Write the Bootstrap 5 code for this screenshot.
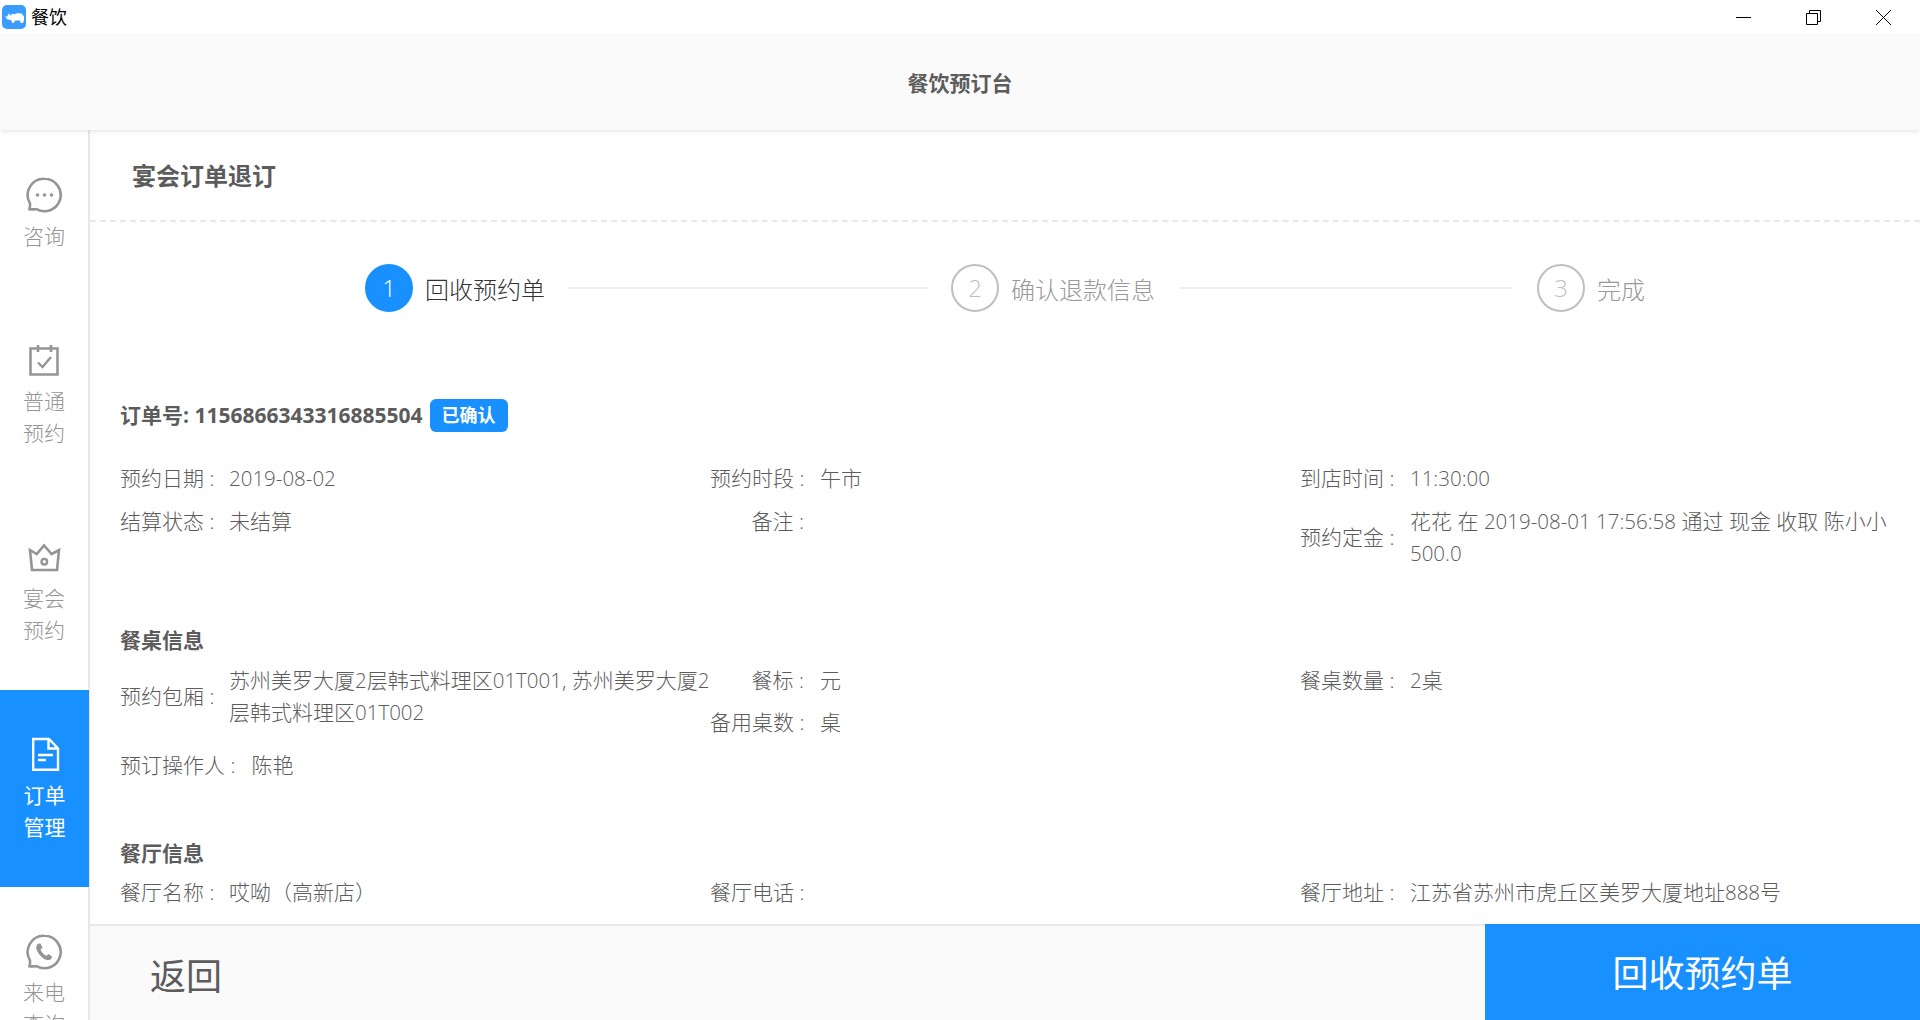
<!DOCTYPE html>
<html lang="zh">
<head>
<meta charset="utf-8">
<title>餐饮</title>
<link href="https://cdn.jsdelivr.net/npm/bootstrap@5.3.0/dist/css/bootstrap.min.css" rel="stylesheet">
<style>
:root{--acc:#1890ff;--txt:#5c5c5c;--ln:#e8e8e8}
html,body{height:100%;overflow:hidden}
body{font-family:"Open Sans","Noto Sans CJK SC",sans-serif;font-size:21px;color:var(--txt);background:#fff;font-weight:300}
.n{font-size:20.5px}
.tbar{height:34px;flex:none;position:relative;z-index:3;background:#fff}
.tbar-name{font-size:18px;color:#000;font-weight:400;margin-left:5px}
.tbar-logo{margin-left:2px;width:24px;height:24px}
.win-ico{width:15px;height:15px;display:block}
.win-ctrls{gap:55px;margin-right:29px}
.hd{height:96px;flex:none;background:#fafafa;box-shadow:0 1px 5px rgba(0,0,0,.12);font-size:21px;font-weight:700;padding-top:3px;position:relative;z-index:2}
.bodywrap{min-height:0;overflow:hidden}
.side{width:90px;flex:none;border-right:2px solid var(--ln)}
.sitem{height:197px;padding-top:47px;color:#959595;line-height:32px;font-size:21px;text-align:center;flex:none}
.sitem.first{height:166px}
.sitem svg{display:block;margin:0 auto 6px;width:36px;height:36px}
.sitem.first svg{margin-bottom:7px}
.sitem.on{background:var(--acc);color:#fff;font-weight:400;width:89px}
.main{min-width:0;min-height:0}
.scroll{min-height:0;overflow:hidden}
.ptitle{height:92px;padding-left:42px;border-bottom:2px dashed var(--ln);font-size:24px;font-weight:700;line-height:92px}
.steps{height:132px;padding-left:275px;font-size:24px;color:#999}
.dot{width:48px;height:48px;border-radius:50%;border:2px solid #bfbfbf;color:#bfbfbf;font-size:24px;flex:none}
.dot.on{background:var(--acc);border-color:var(--acc);color:#fff}
.sname{margin-left:12px;white-space:nowrap;padding-top:3px}
.sname.on{color:#333}
.sline{height:2px;background:#eee;margin:0 24px 0 23px}
.sline-a{width:359px}
.sline-b{width:334px;margin-left:24px}
.details{padding:0 30px}
.ordline{font-weight:700;font-size:21px;height:33px;margin-top:45px}
.stat{background:var(--acc);color:#fff;border-radius:6px;font-size:18px;height:33px;padding:0 12px;margin-left:7px;display:inline-flex;align-items:center}
.frow{--bs-gutter-x:0;line-height:32px}
.lab{flex:none;white-space:nowrap;padding-right:16px}
.lab-w{width:109px}
.lab-w2{width:110px;text-align:right}
.subh{font-weight:700;font-size:21px;line-height:32px}
.foot{height:96px;flex:none;background:#fafafa;border-top:2px solid var(--ln);font-size:36px;padding-left:60px;line-height:1;font-weight:400}
.foot-txt{padding-top:8px}
.foot-btn{width:435px;background:var(--acc);color:#fff;border:0;border-radius:0;font-size:36px;margin-top:-2px;height:calc(100% + 2px);font-weight:400;padding-top:10px}
.foot-btn:hover{background:var(--acc);color:#fff}
.mt-30{margin-top:30px}.mt-11{margin-top:11px}.mt-10{margin-top:10px}.mt-55{margin-top:55px}.mt-56{margin-top:56px}.mt-7{margin-top:7px}.mt-8{margin-top:8px}
.lab-mid{line-height:64px}
</style>
</head>
<body class="d-flex flex-column">
<div class="tbar d-flex align-items-center justify-content-between">
  <div class="d-flex align-items-center">
    <svg class="tbar-logo" viewBox="0 0 24 24"><rect width="24" height="24" rx="5" fill="#3b9cff"/><path d="M2.500 10.500l2.500 1.500 2-4 1 2.800L11 8.500l.8 1 3.200-1.300 4.500.3 2.500 3v4l-1.200 2.500h-2.200l-.6-2.500h-5l-1 2.500H10.500l-1.500-3-3.500-.5z" fill="#fff"/></svg>
    <span class="tbar-name">餐饮</span>
  </div>
  <div class="d-flex align-items-center win-ctrls">
    <svg class="win-ico" viewBox="0 0 15 15"><path d="M0 7.500h15" stroke="#000" fill="none"/></svg>
    <svg class="win-ico" viewBox="0 0 15 15"><path d="M.5 3.500h11v11H.500zM3.500 3.500V.5h11v11h-3" stroke="#000" fill="none"/></svg>
    <svg class="win-ico" viewBox="0 0 15 15"><path d="M0 0l15 15M15 0L0 15" stroke="#000" fill="none"/></svg>
  </div>
</div>
<header class="hd d-flex align-items-center justify-content-center">餐饮预订台</header>
<div class="bodywrap d-flex flex-grow-1">
  <nav class="side d-flex flex-column">
    <div class="sitem first">
      <svg viewBox="0 0 36 36" fill="none" stroke="currentColor" stroke-width="2.600"><path d="M18.500 1.800a16.200 16.200 0 1 1-8 30.300c-2 .2-5 .6-7 .1.500-2 .7-4 .4-6A16.200 16.200 0 0 1 18.500 1.800z"/><g fill="currentColor" stroke="none"><circle cx="11.500" cy="18" r="1.800"/><circle cx="18.500" cy="18" r="1.800"/><circle cx="25.500" cy="18" r="1.800"/></g></svg>
      咨询
    </div>
    <div class="sitem">
      <svg viewBox="0 0 36 36" fill="none" stroke="currentColor" stroke-width="2.600"><path d="M4.500 5.500h27v26h-27zM12 2v7M25 2v7"/><path d="M12 19.500l4.500 4.500 8.500-10" stroke-width="2.400"/></svg>
      普通<br>预约
    </div>
    <div class="sitem">
      <svg viewBox="0 0 36 36" fill="none" stroke="currentColor" stroke-width="2.600"><path d="M4 10l6.700 4L18 5.500 25.700 14 33 10l-2 20H6z"/><circle cx="18.300" cy="21.700" r="2.800" stroke-width="2.400"/></svg>
      宴会<br>预约
    </div>
    <div class="sitem on">
      <svg viewBox="0 0 36 36" fill="none" stroke="currentColor" stroke-width="2.400"><path d="M6.200 2h15.800l9 9.500v21.300H6.200zM21.500 2v9.500H31"/><path d="M11 18h15M11 23h8" stroke-width="2.600"/></svg>
      订单<br>管理
    </div>
    <div class="sitem">
      <svg viewBox="0 0 36 36" fill="none" stroke="currentColor" stroke-width="2.600"><path d="M18.500 1.800a16.200 16.200 0 1 1-8 30.300c-2 .2-5 .6-7 .1.500-2 .7-4 .4-6A16.200 16.200 0 0 1 18.500 1.800z"/><path d="M12.500 9.500c-3.500 2-2.500 6.500.5 10.500s7.500 7.500 11.500 5.500c1-1 2-2 1.200-3.300l-3.200-2.200-2 1.700c-2 0-5-4-6-6.200l2-1.800-2-4.200z" fill="currentColor" stroke="none"/></svg>
      来电<br>查询
    </div>
  </nav>
  <main class="main d-flex flex-column flex-grow-1">
    <div class="scroll flex-grow-1">
      <div class="ptitle">宴会订单退订</div>
      <div class="steps d-flex align-items-center">
        <div class="dot on d-flex align-items-center justify-content-center">1</div><span class="sname on">回收预约单</span>
        <div class="sline sline-a"></div>
        <div class="dot d-flex align-items-center justify-content-center">2</div><span class="sname">确认退款信息</span>
        <div class="sline sline-b"></div>
        <div class="dot d-flex align-items-center justify-content-center">3</div><span class="sname">完成</span>
      </div>
      <div class="details">
        <div class="ordline d-flex align-items-center">订单号: 1156866343316885504<span class="stat">已确认</span></div>
        <div class="row frow mt-30">
          <div class="col-4 d-flex"><span class="lab lab-w">预约日期 :</span><span class="n">2019-08-02</span></div>
          <div class="col-4 d-flex"><span class="lab lab-w2">预约时段 :</span><span>午市</span></div>
          <div class="col-4 d-flex"><span class="lab lab-w2">到店时间 :</span><span class="n">11:30:00</span></div>
        </div>
        <div class="row frow mt-11">
          <div class="col-4 d-flex"><span class="lab lab-w">结算状态 :</span><span>未结算</span></div>
          <div class="col-4 d-flex"><span class="lab lab-w2">备注 :</span></div>
          <div class="col-4 d-flex align-items-center"><span class="lab lab-w2">预约定金 :</span><span>花花 在 <span class="n">2019-08-01 17:56:58</span> 通过 现金 收取 陈小小 <span class="n">500.0</span></span></div>
        </div>
        <div class="subh mt-55">餐桌信息</div>
        <div class="row frow mt-8">
          <div class="col-4 d-flex align-items-start"><span class="lab lab-w lab-mid">预约包厢 :</span><span>苏州美罗大厦<span class="n">2</span>层韩式料理区<span class="n">01T001, </span>苏州美罗大厦<span class="n">2</span>层韩式料理区<span class="n">01T002</span></span></div>
          <div class="col-4">
            <div class="d-flex"><span class="lab lab-w2">餐标 :</span><span>元</span></div>
            <div class="d-flex mt-10"><span class="lab lab-w2">备用桌数 :</span><span>桌</span></div>
          </div>
          <div class="col-4 d-flex"><span class="lab lab-w2">餐桌数量 :</span><span><span class="n">2</span>桌</span></div>
        </div>
        <div class="row frow mt-11">
          <div class="col-4 d-flex"><span class="lab">预订操作人 :</span><span>陈艳</span></div>
        </div>
        <div class="subh mt-56">餐厅信息</div>
        <div class="row frow mt-7">
          <div class="col-4 d-flex"><span class="lab lab-w">餐厅名称 :</span><span>哎呦（高新店）</span></div>
          <div class="col-4 d-flex"><span class="lab lab-w2">餐厅电话 :</span></div>
          <div class="col-4 d-flex"><span class="lab lab-w2">餐厅地址 :</span><span>江苏省苏州市虎丘区美罗大厦地址<span class="n">888</span>号</span></div>
        </div>
      </div>
    </div>
    <footer class="foot d-flex align-items-center justify-content-between">
      <span class="foot-txt">返回</span>
      <button class="btn foot-btn">回收预约单</button>
    </footer>
  </main>
</div>
<script src="https://cdn.jsdelivr.net/npm/bootstrap@5.3.0/dist/js/bootstrap.bundle.min.js"></script>
</body>
</html>
